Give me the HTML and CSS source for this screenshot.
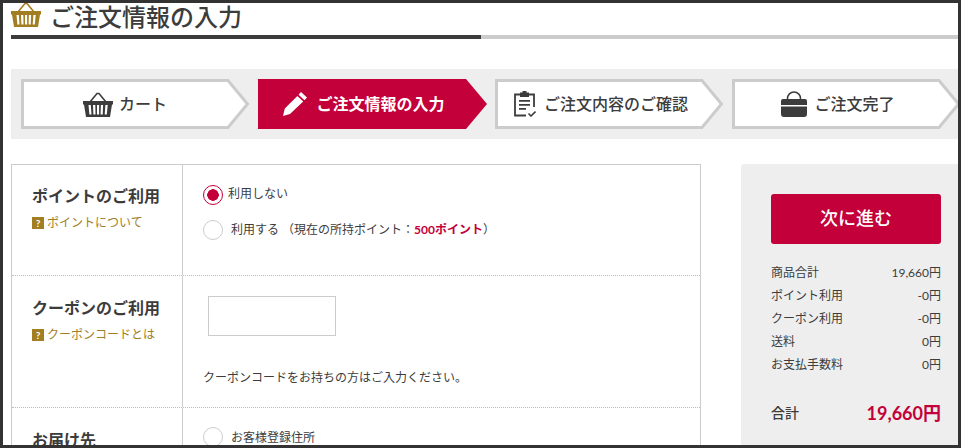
FILE: index.html
```html
<!DOCTYPE html>
<html lang="ja">
<head>
  <meta charset="UTF-8" />
  <title>ご注文情報の入力</title>
  <link rel="stylesheet" href="styles.css">
</head>
<body>
  <svg class="icon-defs" width="0" height="0">
    <symbol id="basket" viewBox="0 0 30 25">
      <path d="M7 10 14 1.500h2L23 10" fill="none" stroke="currentColor" stroke-width="1.600"/>
      <path fill-rule="evenodd" d="M0 9h30v3.500h-1l-2 12.500H3L1 12.500H0zM5.500 13l.9 9.500h2.100l-.7-9.500zM10 13l.4 9.500h2.100l-.2-9.500zM14 13v9.500h2.100V13zM17.900 13l-.3 9.500h2.100l.4-9.500zM22.400 13l-.7 9.500h2.100l.9-9.500z" fill="currentColor"/>
    </symbol>
  </svg>

  <div class="frame">
    <h1 class="page-title">
      <svg class="title-icon"><use href="#basket"/></svg>
      <span>ご注文情報の入力</span>
    </h1>
    <div class="progress"><div class="progress-done"></div></div>

    <div class="steps">
      <div class="step step-cart">
        <svg class="step-shape" viewBox="0 0 229 50"><polygon points="1.500,1.500 207,1.500 226.500,25 207,48.500 1.500,48.500"/></svg>
        <svg class="step-icon basket-icon"><use href="#basket"/></svg>
        <span>カート</span>
      </div>
      <div class="step step-active">
        <svg class="step-shape" viewBox="0 0 229 50"><polygon points="0,0 208,0 229,25 208,50 0,50"/></svg>
        <svg class="step-icon pencil-icon" viewBox="0 0 24 24"><path d="M18 0 24 5.500 21.500 8.300 15.600 2.700zM14.400 4 20.200 9.600 7 22 0 24l1.800-7.500z" fill="currentColor"/></svg>
        <span>ご注文情報の入力</span>
      </div>
      <div class="step">
        <svg class="step-shape" viewBox="0 0 229 50"><polygon points="1.500,1.500 207,1.500 226.500,25 207,48.500 1.500,48.500"/></svg>
        <svg class="step-icon clip-icon" viewBox="0 0 22 26">
          <path d="M6 3.500H1v21h11M15 3.500h5V16" fill="none" stroke="currentColor" stroke-width="1.800"/>
          <path d="M6 1.500h2.500V0h4v1.500H15V6H6zM5 9h11v1.700H5zM5 13h11v1.700H5zM5 17h7v1.700H5z" fill="currentColor"/>
          <path d="M14.500 22.500 17 25l4.500-4.500" fill="none" stroke="currentColor" stroke-width="1.600"/>
        </svg>
        <span>ご注文内容のご確認</span>
      </div>
      <div class="step">
        <svg class="step-shape" viewBox="0 0 229 50"><polygon points="1.500,1.500 207,1.500 226.500,25 207,48.500 1.500,48.500"/></svg>
        <svg class="step-icon bag-icon" viewBox="0 0 26 26">
          <path d="M6.500 9V7.500a6.500 6.500 0 0 1 13 0V9" fill="none" stroke="currentColor" stroke-width="1.500"/>
          <path d="M2 8h22q2 0 2 2v4H0v-4q0-2 2-2zM0 15.500h26V23q0 3-3 3H3q-3 0-3-3z" fill="currentColor"/>
        </svg>
        <span>ご注文完了</span>
      </div>
    </div>

    <div class="content">
      <div class="form-table">
        <div class="form-row row-point">
          <div class="form-head">
            <h2>ポイントのご利用</h2>
            <a class="help-link"><i>?</i>ポイントについて</a>
          </div>
          <div class="form-body">
            <label class="radio-line radio-first"><span class="radio radio-on"></span>利用しない</label>
            <label class="radio-line"><span class="radio"></span><span class="radio-text">利用する （現在の所持ポイント：<b>500ポイント</b>）</span></label>
          </div>
        </div>
        <div class="form-row row-coupon">
          <div class="form-head">
            <h2>クーポンのご利用</h2>
            <a class="help-link"><i>?</i>クーポンコードとは</a>
          </div>
          <div class="form-body">
            <input class="coupon-input" type="text">
            <p class="coupon-note">クーポンコードをお持ちの方はご入力ください。</p>
          </div>
        </div>
        <div class="form-row row-address">
          <div class="form-head">
            <h2>お届け先</h2>
          </div>
          <div class="form-body">
            <label class="radio-line"><span class="radio"></span><span class="radio-text">お客様登録住所</span></label>
          </div>
        </div>
      </div>

      <aside class="summary">
        <a class="next-button">次に進む</a>
        <dl class="price-list">
          <div><dt>商品合計</dt><dd>19,660円</dd></div>
          <div><dt>ポイント利用</dt><dd>-0円</dd></div>
          <div><dt>クーポン利用</dt><dd>-0円</dd></div>
          <div><dt>送料</dt><dd>0円</dd></div>
          <div><dt>お支払手数料</dt><dd>0円</dd></div>
        </dl>
        <div class="total"><span>合計</span><strong>19,660円</strong></div>
      </aside>
    </div>
  </div>
</body>
</html>
```

FILE: styles.css
```css
* {
  margin: 0;
  padding: 0;
  box-sizing: border-box;
}

html, body {
  height: 448px;
  overflow: hidden;
}

body {
  background: #fff;
  color: #3c3c3c;
  font-family: Lato, "Noto Sans CJK JP", sans-serif;
}

.icon-defs {
  position: absolute;
}

.frame {
  height: 448px;
  border: 3px solid #333;
  padding-left: 8px;
  overflow: hidden;
}

.page-title {
  display: flex;
  align-items: center;
  gap: 9px;
  height: 32px;
  font-size: 24px;
  font-weight: 500;
  line-height: 28px;
}

.page-title span {
  margin-bottom: 4px;
}

.title-icon {
  flex: none;
  width: 30px;
  height: 25px;
  color: #a27e22;
  margin-top: -10px;
}

.progress {
  height: 4px;
  background: #ccc;
}

.progress-done {
  width: 470px;
  height: 4px;
  background: #3c3c3c;
}

.steps {
  display: flex;
  gap: 8px;
  height: 70px;
  margin-top: 30px;
  padding: 10px 0 10px 10px;
  background: #eee;
  overflow: hidden;
}

.step {
  position: relative;
  flex: 0 0 229px;
  height: 50px;
  padding-right: 17px;
  display: flex;
  align-items: center;
  justify-content: center;
  font-size: 16px;
  font-weight: 500;
}

.step-cart {
  padding-right: 21px;
}

.step span, .step-icon {
  position: relative;
}

.step span {
  margin-bottom: 3px;
}

.step-shape {
  position: absolute;
  left: 0;
  top: 0;
  width: 229px;
  height: 50px;
}

.step-shape polygon {
  fill: #fff;
  stroke: #ccc;
  stroke-width: 3;
}

.step-active {
  color: #fff;
  font-weight: 700;
}

.step-active .step-shape polygon {
  fill: #c30039;
  stroke: none;
}

.step-icon {
  flex: none;
  margin-right: 6px;
}

.basket-icon {
  width: 30px;
  height: 25px;
}

.pencil-icon {
  width: 24px;
  height: 24px;
  margin-right: 9px;
}

.clip-icon {
  width: 22px;
  height: 26px;
  margin-right: 8px;
}

.bag-icon {
  width: 26px;
  height: 26px;
  margin-right: 7px;
}

.content {
  display: flex;
  justify-content: space-between;
  margin-top: 25px;
}

.form-table {
  width: 690px;
  border: 1px solid #ccc;
  border-bottom: none;
}

.form-row {
  display: flex;
  border-bottom: 1px dotted #bbb;
}

.row-point {
  height: 111px;
}

.row-coupon {
  height: 132px;
}

.row-address {
  height: 100px;
}

.form-head {
  width: 171px;
  padding: 20px 0 0 20px;
  border-right: 1px solid #ccc;
}

.row-coupon .form-head {
  padding-top: 21px;
}

.form-head h2 {
  font-size: 16px;
  font-weight: 700;
  line-height: 22px;
}

.help-link {
  display: flex;
  align-items: center;
  margin-top: 7px;
  font-size: 12px;
  line-height: 18px;
  color: #a27e22;
}

.help-link i {
  width: 12px;
  height: 12px;
  margin-right: 3px;
  background: #a27e22;
  color: #fff;
  font-size: 10px;
  font-style: normal;
  font-weight: 700;
  line-height: 12px;
  text-align: center;
}

.form-body {
  flex: 1;
  padding-left: 20px;
}

.radio-line {
  display: flex;
  align-items: center;
  height: 20px;
  font-size: 12px;
}

.radio-first {
  margin-top: 20px;
  margin-bottom: 15px;
  align-items: flex-start;
  line-height: 18px;
}

.radio {
  flex: none;
  width: 20px;
  height: 20px;
  margin-right: 5px;
  background: #fff;
  border: 1px solid #ccc;
  border-radius: 50%;
}

.radio-text {
  margin-left: 3px;
  margin-bottom: 3px;
}

.radio-on {
  border-color: #c30039;
  background: radial-gradient(circle, #c30039 0 5.500px, #fff 6px);
}

.radio-text b {
  color: #c30039;
}

.coupon-input {
  display: block;
  width: 128px;
  height: 40px;
  margin: 20px 0 0 5px;
  border: 1px solid #ccc;
  background: #fff;
}

.coupon-note {
  margin-top: 33px;
  font-size: 12px;
  line-height: 18px;
}

.row-address .form-head {
  padding-top: 21px;
}

.row-address .radio-line {
  margin-top: 19px;
}

.row-address .radio-text {
  margin-bottom: 2px;
}

.summary {
  width: 217px;
  height: 300px;
  padding: 30px 17px 0 30px;
  background: #eee;
  border-radius: 4px 0 0 0;
}

.next-button {
  display: block;
  height: 50px;
  background: #c30039;
  border-radius: 3px;
  color: #fff;
  font-size: 18px;
  font-weight: 500;
  line-height: 48px;
  text-align: center;
}

.price-list {
  margin-top: 17px;
  font-size: 12px;
}

.price-list div {
  display: flex;
  justify-content: space-between;
  height: 23px;
  line-height: 23px;
}

.total {
  display: flex;
  justify-content: space-between;
  align-items: center;
  margin-top: 23px;
  font-size: 14px;
  font-weight: 500;
}

.total strong {
  color: #c30039;
  font-size: 18px;
}
```
